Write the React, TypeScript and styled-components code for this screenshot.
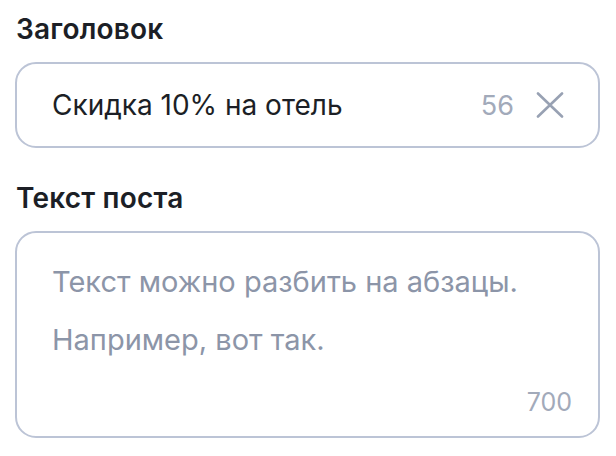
import styled, { createGlobalStyle } from "styled-components";

const GlobalStyle = createGlobalStyle`
  body {
    margin: 0;
    background: #ffffff;
    font-family: Inter, "Noto Sans", sans-serif;
  }
`;

const Page = styled.div`
  width: 616px;
  height: 456px;
  box-sizing: border-box;
  padding: 11px 16px 0 15px;
  display: flex;
  flex-direction: column;
`;

const Label = styled.div`
  font-size: 28px;
  line-height: 36px;
  font-weight: 600;
  letter-spacing: 0.2px;
  color: #1c1f26;
  padding-left: 1px;
  margin-bottom: 15px;
`;

const Field = styled.div<{ $multiline?: boolean }>`
  box-sizing: border-box;
  border: 2px solid #bcc4d6;
  border-radius: 21px;
  display: flex;
  height: ${(p) => (p.$multiline ? "207px" : "86px")};
  margin-bottom: ${(p) => (p.$multiline ? "0" : "32px")};
  padding: ${(p) => (p.$multiline ? "31px 26px 19px 35px" : "0 34px 0 35px")};
  flex-direction: ${(p) => (p.$multiline ? "column" : "row")};
  align-items: ${(p) => (p.$multiline ? "stretch" : "center")};
`;

const Value = styled.div`
  flex: 1;
  font-size: 28px;
  color: #1c1f26;
`;

const Counter = styled.span`
  font-size: 27px;
  color: #a2aaba;
  margin-right: 22px;
`;

const ClearIcon = styled.svg`
  width: 28px;
  height: 26px;
  flex-shrink: 0;
`;

const Placeholder = styled.p`
  margin: 0 0 22px;
  font-size: 29px;
  line-height: 36px;
  color: #8c95a8;
`;

const Footer = styled.div`
  margin-top: auto;
  display: flex;
  justify-content: flex-end;
`;

const SmallCounter = styled.span`
  font-size: 25px;
  color: #a2aaba;
`;

export default function App() {
  return (
    <>
      <GlobalStyle />
      <Page>
        <Label>Заголовок</Label>
        <Field>
          <Value>Скидка 10% на отель</Value>
          <Counter>56</Counter>
          <ClearIcon viewBox="0 0 28 26" fill="none">
            <path
              d="M2 1.5L26 24.5M26 1.5L2 24.5"
              stroke="#98a1b3"
              strokeWidth="2.6"
              strokeLinecap="round"
            />
          </ClearIcon>
        </Field>
        <Label>Текст поста</Label>
        <Field $multiline>
          <Placeholder>Текст можно разбить на абзацы.</Placeholder>
          <Placeholder>Например, вот так.</Placeholder>
          <Footer>
            <SmallCounter>700</SmallCounter>
          </Footer>
        </Field>
      </Page>
    </>
  );
}
